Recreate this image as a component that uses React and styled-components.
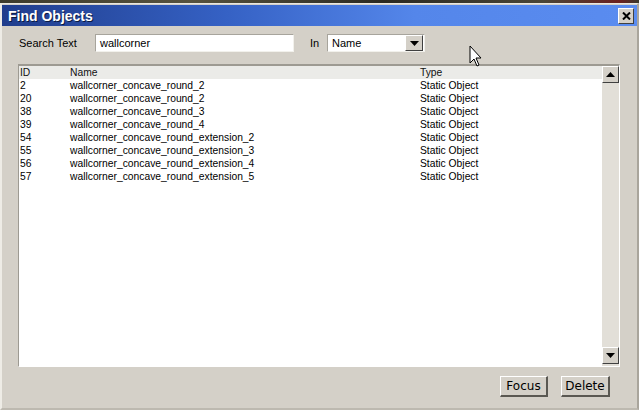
import React from "react";
import styled, { createGlobalStyle } from "styled-components";

const Global = createGlobalStyle`
  html, body { margin: 0; padding: 0; background: #2e2d24; }
  body { font-family: "Liberation Sans", Arial, sans-serif; font-size: 11px; color: #000; }
  #root { width: 639px; height: 410px; overflow: hidden; }
`;

const Frame = styled.div`
  position: relative;
  width: 639px;
  height: 410px;
  display: flex;
  flex-direction: column;
  background: #2e2d24;
`;

const TopStrip = styled.div`
  height: 3px;
  background: linear-gradient(90deg, #3d3b2c, #57533e 30%, #2b2a22 60%, #4a4636 85%, #6b2020 97%, #3a382b);
`;

const Window = styled.div`
  flex: 1;
  display: flex;
  flex-direction: column;
  background: #d4d0c8;
  border-top: 1px solid #e9e7e1;
  border-left: 2px solid #eeece6;
  border-right: 2px solid #a9a59c;
  border-bottom: 2px solid #bdb9b0;
`;

const TitleBar = styled.div`
  height: 21px;
  margin-top: 1px;
  display: flex;
  align-items: center;
  justify-content: space-between;
  padding: 0 3px 0 6px;
  background: linear-gradient(90deg, #203d8c 0%, #3561c4 35%, #5486ea 65%, #5a8cf0 100%);
`;

const Title = styled.span`
  font-family: "Liberation Sans", Arial, sans-serif;
  font-weight: bold;
  font-size: 14px;
  color: #fff;
  text-shadow: 1px 1px 0 #0a1a40;
`;

const CloseButton = styled.div`
  width: 14px;
  height: 14px;
  background: #d4d0c8;
  border-top: 1px solid #fff;
  border-left: 1px solid #fff;
  border-right: 1px solid #404040;
  border-bottom: 1px solid #404040;
  display: flex;
  align-items: center;
  justify-content: center;
`;

const Body = styled.div`
  flex: 1;
  display: flex;
  flex-direction: column;
  padding: 8px 17px 0 16px;
`;

const SearchRow = styled.div`
  display: flex;
  align-items: center;
  height: 18px;
`;

const Label = styled.span`
  font-size: 11px;
  width: ${(p) => p.$w}px;
  padding-left: ${(p) => p.$pl || 0}px;
`;

const Field = styled.div`
  box-sizing: border-box;
  width: ${(p) => p.$w}px;
  height: 18px;
  background: #fff;
  border-top: 1px solid #a7a49c;
  border-left: 1px solid #a7a49c;
  border-right: 1px solid #f2f1ec;
  border-bottom: 1px solid #f2f1ec;
  display: flex;
  align-items: center;
  padding-left: 4px;
  font-size: 11px;
  margin-right: ${(p) => p.$mr || 0}px;
`;

const SelectText = styled.span`
  flex: 1;
`;

const DropButton = styled.div`
  width: 16px;
  height: 14px;
  margin-right: 1px;
  background: #d4d0c8;
  border-top: 1px solid #fff;
  border-left: 1px solid #fff;
  border-right: 1px solid #404040;
  border-bottom: 1px solid #404040;
  display: flex;
  align-items: center;
  justify-content: center;
`;

const ListBox = styled.div`
  margin-top: 12px;
  height: 303px;
  display: flex;
  background: #fff;
  border-top: 2px solid #9d9a92;
  border-left: 1px solid #9d9a92;
  border-right: 1px solid #ffffff;
  border-bottom: 1px solid #ffffff;
  box-sizing: border-box;
`;

const Table = styled.div`
  flex: 1;
  display: flex;
  flex-direction: column;
`;

const Row = styled.div`
  display: grid;
  grid-template-columns: 50px 350px 1fr;
  height: 13px;
  line-height: 13px;
  padding-left: 1px;
  font-size: 10.3px;
  background: ${(p) => (p.$head ? "#ebebe8" : "#fff")};
  color: ${(p) => (p.$head ? "#111" : "#000")};
  white-space: nowrap;
`;

const Scrollbar = styled.div`
  width: 17px;
  display: flex;
  flex-direction: column;
  justify-content: space-between;
  background: #e2dfd8;
  padding-bottom: 2px;
`;

const ScrollButton = styled.div`
  box-sizing: border-box;
  width: 17px;
  height: 17px;
  background: #d4d0c8;
  border-top: 1px solid #fff;
  border-left: 1px solid #fff;
  border-right: 1px solid #404040;
  border-bottom: 1px solid #404040;
  display: flex;
  align-items: center;
  justify-content: center;
`;

const Footer = styled.div`
  display: flex;
  justify-content: flex-end;
  gap: 13px;
  padding: 9px 10px 0 0;
`;

const Button = styled.div`
  box-sizing: border-box;
  width: ${(p) => p.$w}px;
  height: 21px;
  background: #d4d0c8;
  border-top: 1px solid #fff;
  border-left: 1px solid #fff;
  border-right: 2px solid #5a5852;
  border-bottom: 2px solid #5a5852;
  display: flex;
  align-items: center;
  justify-content: center;
  font-family: "DejaVu Sans", Tahoma, sans-serif;
  font-size: 12px;
`;

const Cursor = styled.svg`
  position: absolute;
  left: 469px;
  top: 45px;
`;

const rows = [
  ["2", "wallcorner_concave_round_2"],
  ["20", "wallcorner_concave_round_2"],
  ["38", "wallcorner_concave_round_3"],
  ["39", "wallcorner_concave_round_4"],
  ["54", "wallcorner_concave_round_extension_2"],
  ["55", "wallcorner_concave_round_extension_3"],
  ["56", "wallcorner_concave_round_extension_4"],
  ["57", "wallcorner_concave_round_extension_5"],
];

const Arrow = ({ down }) => (
  <svg width="9" height="5" viewBox="0 0 9 5">
    {down ? <polygon points="0,0 9,0 4.5,5" fill="#000" /> : <polygon points="0,5 9,5 4.5,0" fill="#000" />}
  </svg>
);

export default function App() {
  return (
    <Frame>
      <Global />
      <TopStrip />
      <Window>
        <TitleBar>
          <Title>Find Objects</Title>
          <CloseButton>
            <svg width="9" height="8" viewBox="0 0 9 8">
              <path d="M1 0.5 L8 7.5 M8 0.5 L1 7.5" stroke="#000" strokeWidth="2" />
            </svg>
          </CloseButton>
        </TitleBar>
        <Body>
          <SearchRow>
            <Label $w={76} $pl={1}>Search Text</Label>
            <Field $w={199} $mr={16}>wallcorner</Field>
            <Label $w={17}>In</Label>
            <Field $w={98}>
              <SelectText>Name</SelectText>
              <DropButton><Arrow down /></DropButton>
            </Field>
          </SearchRow>
          <ListBox>
            <Table>
              <Row $head>
                <span>ID</span>
                <span>Name</span>
                <span>Type</span>
              </Row>
              {rows.map(([id, name]) => (
                <Row key={id}>
                  <span>{id}</span>
                  <span>{name}</span>
                  <span>Static Object</span>
                </Row>
              ))}
            </Table>
            <Scrollbar>
              <ScrollButton><Arrow /></ScrollButton>
              <ScrollButton><Arrow down /></ScrollButton>
            </Scrollbar>
          </ListBox>
          <Footer>
            <Button $w={48}>Focus</Button>
            <Button $w={49}>Delete</Button>
          </Footer>
        </Body>
      </Window>
      <Cursor width="14" height="24" viewBox="0 0 14 24">
        <path d="M1 1 L1 18 L5 14 L8 21 L10 20 L7 13 L12 13 Z" fill="#fff" stroke="#000" strokeWidth="1" />
      </Cursor>
    </Frame>
  );
}
